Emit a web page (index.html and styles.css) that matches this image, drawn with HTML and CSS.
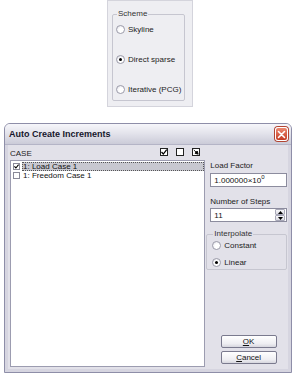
FILE: index.html
```html
<!DOCTYPE html>
<html lang="en">
<head>
    <meta charset="UTF-8">
    <title>Auto Create Increments</title>
    <link rel="stylesheet" href="styles.css">
</head>
<body>
    <!-- solver scheme options -->
    <div class="scheme-panel">
        <fieldset class="group scheme">
            <legend>Scheme</legend>
            <label class="option"><span class="radio"></span>Skyline</label>
            <label class="option"><span class="radio on"></span>Direct sparse</label>
            <label class="option"><span class="radio"></span>Iterative (PCG)</label>
        </fieldset>
    </div>

    <div class="dialog">
        <div class="titlebar">
            <span class="title">Auto Create Increments</span>
            <span class="close">
                <svg width="9" height="9" viewBox="0 0 9 9"><path d="M1.5 1.5 L7.5 7.5 M7.5 1.5 L1.5 7.5" stroke="#fff" stroke-width="1.6" stroke-linecap="round"/></svg>
            </span>
        </div>

        <div class="dialog-body">
            <div class="cases">
                <div class="cases-head">
                    <span>CASE</span>
                    <div class="tools">
                        <span class="tool"><svg width="6" height="6" viewBox="0 0 6 6"><path d="M0.5 3 L2.3 5 L5.7 0.6" fill="none" stroke="#000" stroke-width="1.2"/></svg></span>
                        <span class="tool"></span>
                        <span class="tool"><svg width="6" height="6" viewBox="0 0 6 6"><path d="M0.8 1 L3.5 3.5 M2 4.2 L5.2 5.2 L4.2 2 Z" fill="#000" stroke="#000" stroke-width="0.9"/></svg></span>
                    </div>
                </div>
                <div class="listbox">
                    <div class="item">
                        <span class="check"><svg width="5" height="5" viewBox="0 0 5 5"><path d="M0.4 2.4 L1.9 4 L4.6 0.6" fill="none" stroke="#000" stroke-width="1.1"/></svg></span>
                        <span class="item-text selected">1: Load Case 1</span>
                    </div>
                    <div class="item">
                        <span class="check"></span>
                        <span class="item-text">1: Freedom Case 1</span>
                    </div>
                </div>
            </div>

            <div class="side">
                <div class="field-label">Load Factor</div>
                <div class="textbox">1.000000×10<sup>0</sup></div>

                <div class="field-label steps">Number of Steps</div>
                <div class="textbox spinner">
                    <span>11</span>
                    <span class="spin">
                        <span class="spin-btn"><svg width="5" height="3" viewBox="0 0 5 3"><path d="M0 3 L2.5 0 L5 3 Z" fill="#000"/></svg></span>
                        <span class="spin-btn"><svg width="5" height="3" viewBox="0 0 5 3"><path d="M0 0 L2.5 3 L5 0 Z" fill="#000"/></svg></span>
                    </span>
                </div>

                <fieldset class="group interpolate">
                    <legend>Interpolate</legend>
                    <label class="option"><span class="radio"></span>Constant</label>
                    <label class="option"><span class="radio on"></span>Linear</label>
                </fieldset>

                <div class="buttons">
                    <button class="btn"><u>O</u>K</button>
                    <button class="btn"><u>C</u>ancel</button>
                </div>
            </div>
        </div>
    </div>
</body>
</html>
```
FILE: styles.css
```css
* {
    box-sizing: border-box;
}

html, body {
    margin: 0;
}

body {
    width: 297px;
    height: 376px;
    overflow: hidden;
    background: #fff;
    font: 8px "Liberation Sans", Arial, sans-serif;
    color: #111;
}

/* top panel */
.scheme-panel {
    margin-left: 107px;
    width: 86px;
    height: 107px;
    padding: 8px 0 0 4px;
    background: #EEEEF2;
    border: 1px solid #D4D4DC;
}

.group {
    margin: 0;
    border: 1px solid #C6C6D0;
    border-radius: 2px;
    display: flex;
    flex-direction: column;
}

.group legend {
    padding: 0 1px;
    margin-left: 1px;
    line-height: 10px;
    color: #333;
}

.scheme {
    width: 73px;
    height: 92px;
    padding: 5px 0 0 3px;
    gap: 20px;
}

.option {
    display: flex;
    align-items: center;
    gap: 3px;
    height: 10px;
    color: #222;
}

.radio {
    position: relative;
    flex: none;
    width: 9px;
    height: 9px;
    border-radius: 50%;
    border: 1px solid #9C9CAA;
    background: radial-gradient(circle at 65% 65%, #fff 40%, #DCDCE4);
}

.radio.on::after {
    content: "";
    position: absolute;
    left: 2px;
    top: 2px;
    width: 3px;
    height: 3px;
    border-radius: 50%;
    background: #000;
}

/* dialog */
.dialog {
    margin: 16px 0 0 4px;
    width: 288px;
    height: 250px;
    border: 1px solid #8E8EA8;
    border-radius: 6px 6px 0 0;
    background: #E2E1E9;
    display: flex;
    flex-direction: column;
    overflow: hidden;
}

.titlebar {
    flex: none;
    height: 21px;
    display: flex;
    align-items: center;
    justify-content: space-between;
    padding: 0 3px 0 4px;
    background: linear-gradient(#F6F6FA, #E4E4EC 45%, #CBCBD8);
    border-bottom: 1px solid #B4B4C6;
}

.title {
    font-weight: bold;
    font-size: 9px;
    color: #16162C;
}

.close {
    width: 13px;
    height: 14px;
    display: flex;
    align-items: center;
    justify-content: center;
    border: 1px solid #fff;
    border-radius: 3px;
    background: linear-gradient(#EC8A72, #C43A22);
    box-shadow: 0 0 0 1px #B24432;
}

.dialog-body {
    flex: 1;
    display: flex;
    gap: 5px;
    padding: 2px 4px 5px 5px;
    box-shadow: inset 3px 0 0 #D6D5E0, inset -3px 0 0 #D6D5E0, inset 0 -3px 0 #D6D5E0;
}

.cases {
    width: 196px;
    display: flex;
    flex-direction: column;
}

.cases-head {
    height: 13px;
    display: flex;
    align-items: flex-end;
    justify-content: space-between;
    padding: 0 5px 2px 0;
    color: #222;
}

.tools {
    display: flex;
    gap: 8px;
    align-self: flex-start;
    margin-top: 1px;
}

.tool {
    width: 8px;
    height: 8px;
    border: 1px solid #222;
    background: #fff;
    display: flex;
    align-items: center;
    justify-content: center;
}

.listbox {
    flex: 1;
    background: #fff;
    border: 1px solid #9C9CB0;
    padding: 1px 0 0 2px;
}

.item {
    height: 9px;
    display: flex;
    align-items: center;
    gap: 2px;
}

.check {
    flex: none;
    width: 7px;
    height: 7px;
    border: 1px solid #8A8A98;
    background: #fff;
    display: flex;
    align-items: center;
    justify-content: center;
}

.item-text {
    flex: 1;
    height: 9px;
    line-height: 9px;
    padding-left: 1px;
}

.item-text.selected {
    background: #C8C8D0;
    outline: 1px dotted #555;
    outline-offset: -1px;
}

/* right column */
.side {
    width: 77px;
    display: flex;
    flex-direction: column;
}

.field-label {
    line-height: 10px;
    margin: 14px 0 2px;
    color: #222;
}

.field-label.steps {
    margin: 10px 0 1px;
}

.textbox {
    height: 14px;
    display: flex;
    align-items: center;
    padding: 0 3px;
    background: #fff;
    border: 1px solid #8C8C9E;
}

.textbox sup {
    font-size: 6px;
    align-self: flex-start;
    line-height: 7px;
}

.spinner {
    justify-content: space-between;
    padding-right: 1px;
}

.spin {
    display: flex;
    flex-direction: column;
    gap: 0;
}

.spin-btn {
    width: 10px;
    height: 6px;
    display: flex;
    align-items: center;
    justify-content: center;
    background: linear-gradient(#F8F8FA, #DADAE2);
    border: 1px solid #A8A8B8;
    border-radius: 1px;
}

.interpolate {
    margin: 7px 0 0 -4px;
    height: 41px;
    padding: 1px 0 0 5px;
    gap: 7px;
}

.buttons {
    margin: auto 0 3px;
    display: flex;
    flex-direction: column;
    align-items: center;
    gap: 3px;
}

.btn {
    width: 56px;
    height: 13px;
    padding: 0;
    font: 8px "Liberation Sans", Arial, sans-serif;
    color: #111;
    border: 1px solid #7A7A8E;
    border-radius: 2px;
    background: linear-gradient(#FFFFFF, #EEEEF2 70%, #D6D6DE);
}
```
